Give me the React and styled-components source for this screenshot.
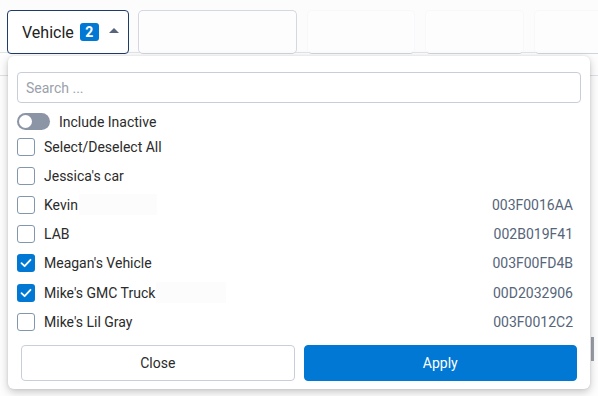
import styled, { createGlobalStyle } from "styled-components";

const GlobalStyle = createGlobalStyle`
  html, body {
    margin: 0;
    padding: 0;
    background: #ffffff;
    font-family: Roboto, "Liberation Sans", Arial, sans-serif;
  }
`;

const vehicles = [
  { name: "Jessica's car", code: "", checked: false },
  { name: "Kevin", code: "003F0016AA", checked: false, redact: 78 },
  { name: "LAB", code: "002B019F41", checked: false },
  { name: "Meagan's Vehicle", code: "003F00FD4B", checked: true },
  { name: "Mike's GMC Truck", code: "00D2032906", checked: true, redact: 70 },
  { name: "Mike's Lil Gray", code: "003F0012C2", checked: false },
];

const Check = () => (
  <svg width="12" height="10" viewBox="0 0 12 10">
    <path d="M1.5 5.2 L4.6 8.2 L10.5 1.8" fill="none" stroke="#fff" strokeWidth="1.8" strokeLinecap="round" strokeLinejoin="round" />
  </svg>
);

const App = () => {
  return (
    <Page>
      <GlobalStyle />
      <Toolbar>
        <FilterButton>
          Vehicle
          <Badge>2</Badge>
          <Caret />
        </FilterButton>
        <GhostBox $w={159} />
        <GhostBox $w={108} $faded />
        <GhostBox $w={99} $faded />
        <GhostBox $w={80} $faded />
      </Toolbar>
      <Divider />
      <ScrollHint />
      <Dropdown>
        <SearchInput placeholder="Search ..." />
        <ToggleRow>
          <Toggle>
            <Knob />
          </Toggle>
          Include Inactive
        </ToggleRow>
        <List>
          <Row>
            <Box />
            <Name>Select/Deselect All</Name>
          </Row>
          {vehicles.map((v) => (
            <Row key={v.name}>
              <Box $checked={v.checked}>{v.checked && <Check />}</Box>
              <Name>{v.name}</Name>
              {v.redact && <Redacted style={{ width: v.redact }} />}
              <Code>{v.code}</Code>
            </Row>
          ))}
        </List>
        <Actions>
          <Button>Close</Button>
          <Button $primary>Apply</Button>
        </Actions>
      </Dropdown>
    </Page>
  );
};

const Page = styled.div`
  position: relative;
  width: 598px;
  height: 396px;
  overflow: hidden;
  background: #fdfdfd;
`;

const Toolbar = styled.div`
  display: flex;
  align-items: flex-start;
  gap: 9px;
  height: 53px;
  padding: 10px 0 0 7px;
  box-sizing: border-box;
  background: #fcfcfc;
  border-bottom: 1px solid #dfe3ea;
`;

const FilterButton = styled.div`
  display: flex;
  align-items: center;
  flex: none;
  width: 122px;
  height: 44px;
  box-sizing: border-box;
  padding-left: 14px;
  border: 1px solid #1d3b6b;
  border-radius: 4px;
  background: #fff;
  font-size: 16px;
  color: #222;
`;

const Badge = styled.span`
  display: inline-flex;
  align-items: center;
  justify-content: center;
  width: 19px;
  height: 18px;
  margin-left: 6px;
  border-radius: 3px;
  background: #0078d4;
  color: #fff;
  font-weight: 700;
  font-size: 14px;
`;

const Caret = styled.span`
  width: 0;
  height: 0;
  margin-left: 10px;
  margin-bottom: 3px;
  border-left: 5px solid transparent;
  border-right: 5px solid transparent;
  border-bottom: 5px solid #56657a;
`;

const GhostBox = styled.div`
  flex: none;
  width: ${(p) => p.$w}px;
  height: 44px;
  box-sizing: border-box;
  border: 1px solid ${(p) => (p.$faded ? "#f7f8fa" : "#d3d8e1")};
  border-bottom-color: #cfd4de;
  border-radius: 5px;
  background: #fdfdfd;
  & + & {
    margin-left: 1px;
  }
`;

const Divider = styled.div`
  margin-top: 22px;
  height: 1px;
  background: #dde1e7;
`;

const ScrollHint = styled.div`
  position: absolute;
  left: 591px;
  top: 337px;
  width: 3px;
  height: 24px;
  background: #9aa0a8;
`;

const Dropdown = styled.div`
  position: absolute;
  left: 8px;
  top: 56px;
  width: 582px;
  box-sizing: border-box;
  padding: 16px 9px 8px 9px;
  background: #fff;
  border-radius: 6px;
  box-shadow: 0 3px 8px rgba(0, 0, 0, 0.22), 0 0 3px rgba(0, 0, 0, 0.08);
  display: flex;
  flex-direction: column;
`;

const SearchInput = styled.input`
  height: 31px;
  box-sizing: border-box;
  padding: 0 8px;
  border: 1px solid #c8cdd8;
  border-radius: 4px;
  font-family: inherit;
  font-size: 14px;
  outline: none;
  &::placeholder {
    color: #9aa1ab;
  }
`;

const ToggleRow = styled.div`
  display: flex;
  align-items: center;
  gap: 9px;
  margin-top: 9px;
  height: 19px;
  font-size: 14px;
  color: #2b2b2b;
`;

const Toggle = styled.div`
  position: relative;
  width: 33px;
  height: 17px;
  border-radius: 9px;
  background: #8b95a6;
`;

const Knob = styled.span`
  position: absolute;
  left: 2px;
  top: 2px;
  width: 13px;
  height: 13px;
  border-radius: 50%;
  background: #fff;
`;

const List = styled.div`
  display: flex;
  flex-direction: column;
  margin-top: 1px;
`;

const Row = styled.div`
  display: flex;
  align-items: center;
  height: 29.2px;
  font-size: 14px;
  color: #2b2b2b;
`;

const Box = styled.span`
  display: inline-flex;
  align-items: center;
  justify-content: center;
  flex: none;
  width: 18px;
  height: 18px;
  box-sizing: border-box;
  border-radius: 3px;
  border: ${(p) => (p.$checked ? "none" : "1px solid #8296ad")};
  background: ${(p) => (p.$checked ? "#0078d4" : "#fff")};
`;

const Name = styled.span`
  margin-left: 9px;
`;

const Redacted = styled.span`
  height: 21px;
  margin-left: 1px;
  background: #fcfcfc;
`;

const Code = styled.span`
  margin-left: auto;
  margin-right: 8px;
  color: #56657a;
`;

const Actions = styled.div`
  display: grid;
  grid-template-columns: 1fr 1fr;
  gap: 9px;
  margin: 9px 4px 0 4px;
`;

const Button = styled.button`
  height: 36px;
  border-radius: 4px;
  border: 1px solid ${(p) => (p.$primary ? "#0078d4" : "#c9cfda")};
  background: ${(p) => (p.$primary ? "#0078d4" : "#fff")};
  color: ${(p) => (p.$primary ? "#fff" : "#2b2b2b")};
  font-family: inherit;
  font-size: 14px;
`;

export default App;
